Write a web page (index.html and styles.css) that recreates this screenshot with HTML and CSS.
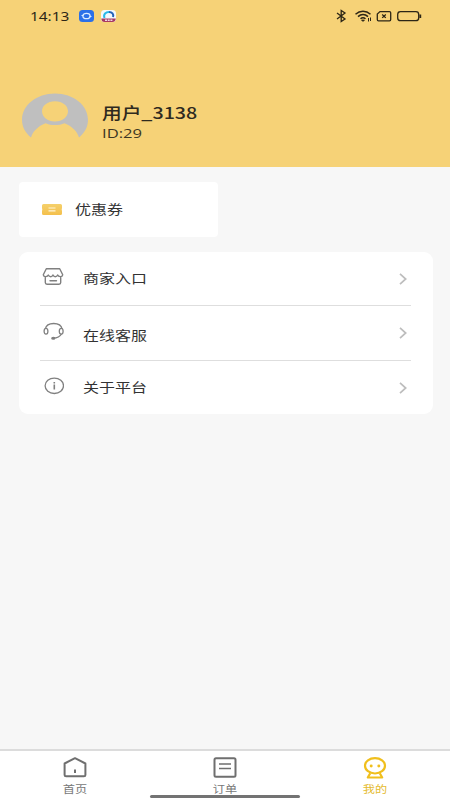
FILE: index.html
```html
<!DOCTYPE html>
<html lang="zh-CN">
<head>
<meta charset="utf-8">
<title>我的</title>
<link rel="stylesheet" href="styles.css">
</head>
<body>
<div class="app">
  <header class="header">
    <div class="status">
      <span class="time wide">14:13</span>
      <svg class="apps" width="40" height="14" viewBox="0 0 40 14">
        <rect x="1" y="1" width="15" height="12" rx="3.5" fill="#2b70e8"/>
        <ellipse cx="8.500" cy="7" rx="3.600" ry="2.700" fill="none" stroke="#dcecff" stroke-width="1.300"/>
        <path d="M3.500 6.500h2M11.500 7.500h2" stroke="#dcecff"/>
        <rect x="23" y="1" width="15" height="12" rx="3.500" fill="#f4f8fc"/>
        <path d="M26.500 9C25 5 28 3 31 3" fill="none" stroke="#29b9e8" stroke-width="2"/>
        <path d="M31 3C34 3 36 5 35 8" fill="none" stroke="#2463b8" stroke-width="2"/>
        <path d="M23.300 9.500h14.500c-.3 2.500-1.500 3.500-3.300 3.500h-8c-2 0-3-1-3.200-3.500z" fill="#a83a62"/>
        <path d="M27 11.200h8" stroke="#efd4e2" stroke-width="1.500" stroke-dasharray="2 .7"/>
      </svg>
      <svg class="signals" width="90" height="14" viewBox="0 0 90 14" fill="none" stroke="#2c2616" stroke-width="1.300">
        <path d="M2 4l8 6-3.800 2.500v-11L10 4 2 10"/>
        <path d="M20.500 5.200c4.500-4 10.500-4 15 0M23 7.600c3-2.700 7-2.700 10 0M25.500 9.800c1.500-1.300 3.500-1.300 5 0" stroke-width="1.500"/>
        <path d="M26.500 11h3L28 12.500z" fill="#2c2616" stroke-width=".7"/>
        <path d="M33.500 9v3.500M35.500 8.500v3.500" stroke-width="1"/>
        <path d="M45 2.600h9.500q1.200 0 1.200 1.200v6.800q0 1.200-1.200 1.200h-11q-1.200 0-1.200-1.200V5z"/>
        <path d="M47.200 5.500l3.600 3.400M50.800 5.500l-3.600 3.400"/>
        <rect x="62.700" y="2.700" width="21" height="9" rx="2.800"/>
        <path d="M85.300 5.500v3.500" stroke-width="1.800"/>
      </svg>
    </div>
    <div class="profile">
      <svg class="avatar" width="66" height="46" viewBox="0 0 66 46">
        <path fill="#bfbfbf" fill-rule="evenodd" d="M9 44.500C3.500 40 0 34 0 27 0 12 14.500 .5 33 .5S66 12 66 27c0 7-3.500 13-9 17.500-1.800-6.300-7-11.300-14.500-14.300-5.500 2.500-13.500 2.500-19 0C16 33.200 10.800 38.200 9 44.500zM33 8.200c-7.500 0-13 4.300-13 10.100s5.500 10.200 13 10.200 13-4.400 13-10.200S40.500 8.200 33 8.200z"/>
      </svg>
      <div class="who">
        <div class="name wide">用户_3138</div>
        <div class="uid wide">ID:29</div>
      </div>
    </div>
  </header>

  <main class="main">
    <section class="coupon">
      <svg width="20" height="11" viewBox="0 0 20 11">
        <defs><linearGradient id="g" x2="0" y2="1"><stop stop-color="#f5d06b"/><stop offset="1" stop-color="#f4c04c"/></linearGradient></defs>
        <path d="M1.500 0h17Q20 0 20 1.500V4q-.6 1.500 0 3v2.500q0 1.500-1.500 1.500h-17Q0 11 0 9.500V7q.6-1.500 0-3V1.500Q0 0 1.500 0z" fill="url(#g)"/>
        <path d="M6.500 4h7M6.500 6.800h7" stroke="#fff5d8" stroke-width="1.200"/>
      </svg>
      <span class="wide label">优惠券</span>
    </section>

    <section class="menu">
      <div class="row shop">
        <svg class="icon" width="22" height="18" viewBox="0 0 22 18" fill="none" stroke="#808080" stroke-width="1.400" stroke-linejoin="round" stroke-linecap="round">
          <path d="M4.300 .8h13.400L20.700 6.800c-.3 2.300-4.200 2.500-5 .2-1.200 2.300-3.700 2.300-4.700 0-1 2.300-3.500 2.300-4.700 0-.8 2.300-4.700 2.100-5-.2z"/>
          <path d="M3.300 9.500v5q0 1.700 1.700 1.700h12q1.700 0 1.700-1.700v-5M8 12.800h6.500"/>
        </svg>
        <span class="wide label">商家入口</span>
        <svg class="chev" width="8" height="12" viewBox="0 0 8 12"><path d="M1 .8L6.700 6 1 11.200"/></svg>
      </div>
      <div class="row service">
        <svg class="icon" width="22" height="18" viewBox="0 0 22 18" fill="none" stroke="#808080" stroke-width="1.300">
          <path d="M3.300 7C4 3.300 7.500 1.500 11.700 1.500s7.700 1.800 8.400 5.500"/>
          <ellipse cx="4" cy="9.300" rx="1.900" ry="2.900"/><ellipse cx="19.200" cy="9.300" rx="1.900" ry="2.900"/>
          <path d="M19.500 12c-1.500 2.800-4 4-8.500 4.200"/><ellipse cx="11.300" cy="16.200" rx="1.500" ry=".9" fill="#777"/>
        </svg>
        <span class="wide label">在线客服</span>
        <svg class="chev" width="8" height="12" viewBox="0 0 8 12"><path d="M1 .8L6.700 6 1 11.200"/></svg>
      </div>
      <div class="row about">
        <svg class="icon" width="22" height="18" viewBox="0 0 22 18" fill="none" stroke="#808080" stroke-width="1.300">
          <ellipse cx="12.300" cy="8.800" rx="9.200" ry="7.700"/><path d="M12.300 5v1.500M12.300 7.500v5" stroke-width="1.600"/>
        </svg>
        <span class="wide label">关于平台</span>
        <svg class="chev" width="8" height="12" viewBox="0 0 8 12"><path d="M1 .8L6.700 6 1 11.200"/></svg>
      </div>
    </section>
  </main>

  <nav class="tabs">
    <div class="tab">
      <svg width="24" height="22" viewBox="0 0 24 22" fill="none" stroke="#6f6f6f" stroke-width="2" stroke-linejoin="round">
        <path d="M1.600 6.500L12 1.200 22.400 6.500v11.500q0 1.200-1.500 1.200H3.100q-1.500 0-1.500-1.200zM12 12.500v3.500"/>
      </svg>
      <span>首页</span>
    </div>
    <div class="tab">
      <svg width="24" height="22" viewBox="0 0 24 22" fill="none" stroke="#6f6f6f" stroke-width="2">
        <rect x="1.500" y="1.300" width="21" height="18.500" rx="1.500"/><path d="M6 7h12M6 11.500h12" stroke-width="1.600"/>
      </svg>
      <span>订单</span>
    </div>
    <div class="tab active">
      <svg width="24" height="22" viewBox="0 0 24 22" fill="none" stroke="#f0bf1d" stroke-width="2.200" stroke-linejoin="round">
        <ellipse cx="12" cy="8.800" rx="10" ry="7.700"/><path d="M7.200 16.300L4.800 20.500h14.400L16.800 16.300"/>
        <ellipse cx="8.200" cy="9" rx="1.500" ry="1.400" fill="#f0bf1d" stroke="none"/><ellipse cx="15.800" cy="9" rx="1.500" ry="1.400" fill="#f0bf1d" stroke="none"/>
      </svg>
      <span>我的</span>
    </div>
    <div class="homebar"></div>
  </nav>
</div>
</body>
</html>
```
FILE: styles.css
```css
* { box-sizing: border-box; }
body {
  margin: 0;
  font-family: "Noto Sans CJK SC", sans-serif;
  color: #333;
}
svg { display: block; flex: none; }
.app {
  width: 450px;
  height: 800px;
  display: flex;
  flex-direction: column;
  background: #f7f7f7;
  overflow: hidden;
}
.wide {
  display: inline-block;
  transform: scaleX(1.23);
  transform-origin: left center;
  white-space: nowrap;
}
.header { height: 167px; background: #f6d277; }
.status {
  height: 32px;
  padding: 0 25px 0 30px;
  display: flex;
  align-items: center;
}
.time {
  width: 48px;
  font: 400 12.500px/16px "Noto Sans", sans-serif;
  color: #2c2616;
  padding-top: 1px;
}
.signals { margin-left: auto; }
.profile {
  display: flex;
  padding: 61px 0 0 22px;
}
.who { margin: 9px 0 0 14px; }
.who .wide { display: block; width: 90px; }
.name { font-size: 16px; line-height: 20px; font-weight: 500; color: #2e2a1f; }
.uid { margin-top: 1px; font: 13.500px/20px "Open Sans", sans-serif; color: #3d3724; }
.main { flex: 1; padding: 15px 17px 0 19px; }
.coupon {
  width: 199px;
  height: 55px;
  padding-left: 23px;
  display: flex;
  align-items: center;
  gap: 13px;
  background: #fff;
  border-radius: 4px;
}
.label { font-size: 13px; line-height: 20px; }
.coupon .label { margin-top: -2px; }
.menu {
  margin-top: 15px;
  height: 162px;
  padding: 0 22px 0 21px;
  background: #fff;
  border-radius: 9px;
}
.row {
  height: 55px;
  display: flex;
  align-items: flex-start;
  border-bottom: 1px solid #dedede;
}
.row.shop { height: 54px; }
.row.about { border: 0; }
.icon { margin: 16px 0 0 2px; }
.row .label { margin: 16px 0 0 19px; }
.row.service .label { margin-top: 19px; }
.chev { margin: 21px 4px 0 auto; fill: none; stroke: #bdbdbd; stroke-width: 1.700; }
.tabs {
  position: relative;
  height: 51px;
  display: flex;
  background: #fff;
  border-top: 2px solid #dcdcdc;
}
.tab {
  flex: 1;
  display: flex;
  flex-direction: column;
  align-items: center;
  padding-top: 6px;
  font-size: 10px;
  line-height: 14px;
  color: #777;
}
.tab span { margin-top: 3px; transform: scaleX(1.220); }
.tab.active { color: #e5bb30; }
.homebar {
  position: absolute;
  left: 150px;
  bottom: 2px;
  width: 150px;
  height: 3px;
  border-radius: 2px;
  background: #737373;
}
```
